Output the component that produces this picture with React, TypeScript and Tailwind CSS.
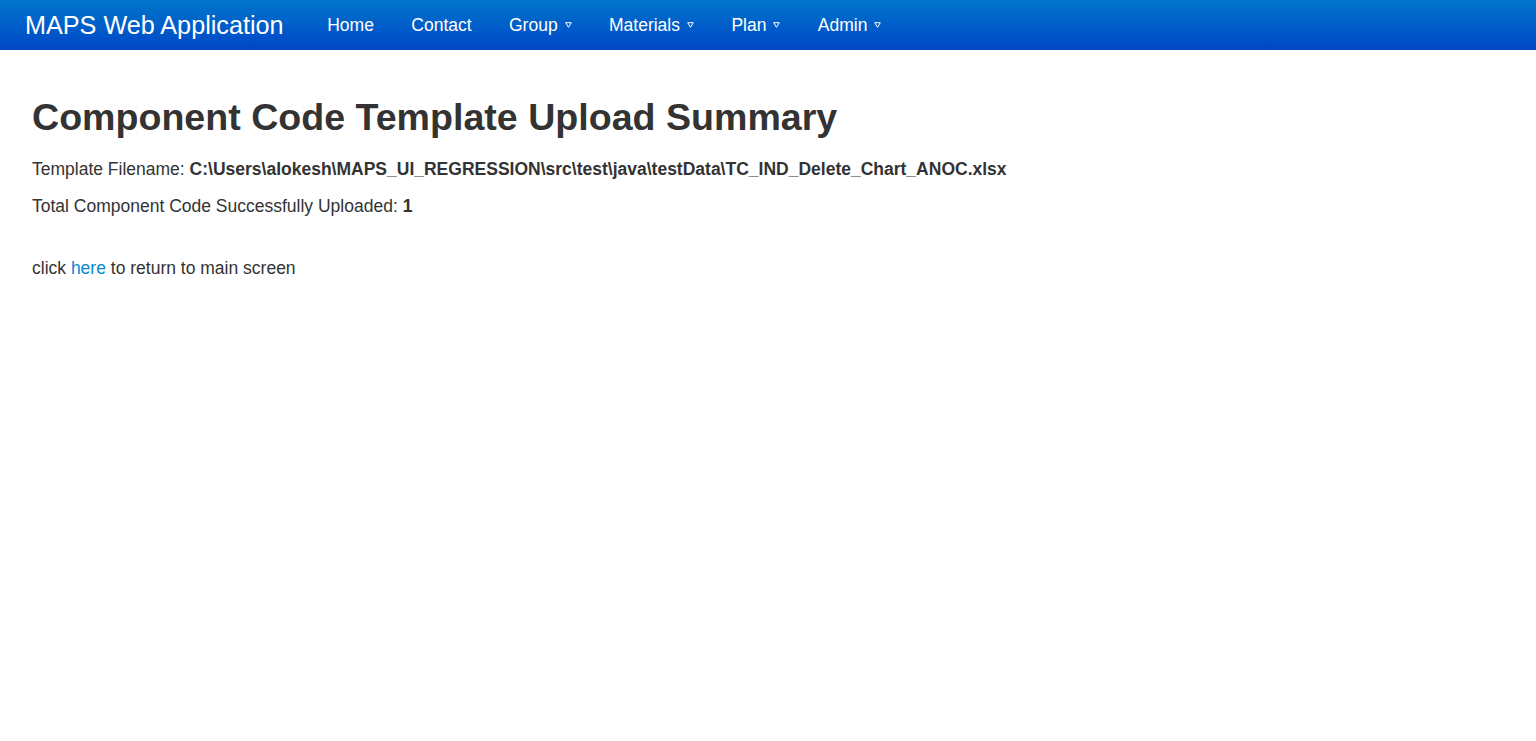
import React from "react";

function Caret() {
  return (
    <svg width="7" height="6" viewBox="0 0 7 6" className="ml-[7px] mt-[1px]" aria-hidden>
      <path d="M0.7 0.7 H6.3 L3.5 5.3 Z" fill="none" stroke="white" strokeWidth="1" strokeLinejoin="miter" />
    </svg>
  );
}

export default function App() {
  const items: { label: string; caret?: boolean }[] = [
    { label: "Home" },
    { label: "Contact" },
    { label: "Group", caret: true },
    { label: "Materials", caret: true },
    { label: "Plan", caret: true },
    { label: "Admin", caret: true },
  ];
  return (
    <div className="min-h-screen bg-white text-[#333333]" style={{ fontFamily: '"Liberation Sans", Arial, sans-serif' }}>
      <nav className="h-[50px] bg-gradient-to-b from-[#0075ca] to-[#0046c8] border-b border-[#0040b8] flex items-center">
        <a className="pl-[25px] pr-[25px] text-[25.2px] leading-[50px] text-white whitespace-nowrap">MAPS Web Application</a>
        <ul className="flex items-center">
          {items.map((it) => (
            <li key={it.label} className="px-[18.7px] flex items-center text-[17.5px] leading-[50px] text-white">
              <span>{it.label}</span>
              {it.caret && <Caret />}
            </li>
          ))}
        </ul>
      </nav>
      <main className="px-[32px] pt-[47px]">
        <h1 className="text-[37.6px] leading-[41px] font-bold mb-[19px] text-[#333333]">
          Component Code Template Upload Summary
        </h1>
        <p className="text-[17.5px] leading-[25px] mb-[12px]">
          Template Filename: <b>C:\Users\alokesh\MAPS_UI_REGRESSION\src\test\java\testData\TC_IND_Delete_Chart_ANOC.xlsx</b>
        </p>
        <p className="text-[17.5px] leading-[25px] mb-[12px]">
          Total Component Code Successfully Uploaded: <b>1</b>
        </p>
        <div className="h-[25px]" />
        <p className="text-[17.5px] leading-[25px]">
          click <a className="text-[#0a88d0]">here</a> to return to main screen
        </p>
      </main>
    </div>
  );
}
